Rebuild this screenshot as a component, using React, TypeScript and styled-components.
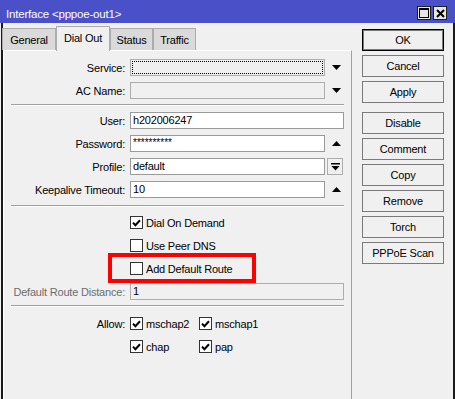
import React, { FC, ReactNode } from "react";
import styled, { createGlobalStyle } from "styled-components";

const GlobalStyle = createGlobalStyle`
  html, body {
    margin: 0;
    padding: 0;
    background: #ffffff;
  }
  body {
    font-family: "Liberation Sans", Arial, sans-serif;
    font-size: 11px;
    letter-spacing: -0.2px;
    color: #000;
  }
`;

const TriangleDown = () => (
  <svg width="9" height="5" viewBox="0 0 9 5">
    <polygon points="0,0 9,0 4.5,5" fill="#000" />
  </svg>
);

const TriangleUp = () => (
  <svg width="9" height="5" viewBox="0 0 9 5">
    <polygon points="0,5 9,5 4.5,0" fill="#000" />
  </svg>
);

const BarDown = () => (
  <svg width="9" height="8" viewBox="0 0 9 8">
    <rect x="0" y="0" width="9" height="1.5" fill="#000" />
    <polygon points="0.5,3 8.5,3 4.5,7.5" fill="#000" />
  </svg>
);

const Tick = () => (
  <svg width="9" height="8" viewBox="0 0 9 8">
    <path d="M1 3.6 L3.4 6.2 L8 1.2" stroke="#000" strokeWidth="2" fill="none" />
  </svg>
);

type CheckProps = {
  checked?: boolean;
  width?: number;
  children: ReactNode;
};

const Check: FC<CheckProps> = (props) => (
  <CheckItem $w={props.width}>
    <Box>{props.checked ? <Tick /> : null}</Box>
    <span>{props.children}</span>
  </CheckItem>
);

type FieldProps = {
  label?: string;
  disabled?: boolean;
  children?: ReactNode;
};

const FormRow: FC<FieldProps> = (props) => (
  <Row>
    <Label $disabled={props.disabled}>{props.label ?? ""}</Label>
    <Field>{props.children}</Field>
  </Row>
);

const App: FC = () => {
  return (
    <>
      <GlobalStyle />
      <Window>
        <TitleBar>
          <Title>Interface &lt;pppoe-out1&gt;</Title>
          <TitleButtons>
            <TitleBtn>
              <svg width="10" height="10" viewBox="0 0 10 10">
                <rect x="0.5" y="0.5" width="9" height="9" fill="none" stroke="#000" />
                <rect x="0" y="0" width="10" height="2" fill="#000" />
              </svg>
            </TitleBtn>
            <TitleBtn>
              <svg width="9" height="9" viewBox="0 0 9 9">
                <path d="M1 1 L8 8 M8 1 L1 8" stroke="#000" strokeWidth="2" />
              </svg>
            </TitleBtn>
          </TitleButtons>
        </TitleBar>

        <Body>
          <LeftCol>
            <Tabs>
              <Tab $w={54}>General</Tab>
              <Tab $w={54} $active>
                Dial Out
              </Tab>
              <Tab $w={43}>Status</Tab>
              <Tab $w={43}>Traffic</Tab>
            </Tabs>

            <Panel>
              <Section $top={8} $bottom={5}>
                <FormRow label="Service:">
                  <TextBox $short $disabled $focus />
                  <Arrow>
                    <TriangleDown />
                  </Arrow>
                </FormRow>
                <FormRow label="AC Name:">
                  <TextBox $short $disabled />
                  <Arrow>
                    <TriangleDown />
                  </Arrow>
                </FormRow>
              </Section>
              <Sep />
              <Section $top={6} $bottom={7}>
                <FormRow label="User:">
                  <TextBox>h202006247</TextBox>
                </FormRow>
                <FormRow label="Password:">
                  <TextBox $short>
                    <Stars>**********</Stars>
                  </TextBox>
                  <Arrow>
                    <TriangleUp />
                  </Arrow>
                </FormRow>
                <FormRow label="Profile:">
                  <TextBox $short>default</TextBox>
                  <SmallBtn>
                    <BarDown />
                  </SmallBtn>
                </FormRow>
                <FormRow label="Keepalive Timeout:">
                  <TextBox $short>10</TextBox>
                  <Arrow>
                    <TriangleUp />
                  </Arrow>
                </FormRow>
              </Section>
              <Sep />
              <Section $top={7} $bottom={5}>
                <FormRow>
                  <Check checked>Dial On Demand</Check>
                </FormRow>
                <FormRow>
                  <Check>Use Peer DNS</Check>
                </FormRow>
                <FormRow>
                  <Highlight>
                    <Check>Add Default Route</Check>
                  </Highlight>
                </FormRow>
                <FormRow label="Default Route Distance:" disabled>
                  <TextBox $disabled>1</TextBox>
                </FormRow>
              </Section>
              <Sep />
              <Section $top={8} $bottom={8}>
                <FormRow label="Allow:">
                  <Check checked width={69}>
                    mschap2
                  </Check>
                  <Check checked>mschap1</Check>
                </FormRow>
                <FormRow>
                  <Check checked width={69}>
                    chap
                  </Check>
                  <Check checked>pap</Check>
                </FormRow>
              </Section>
            </Panel>
          </LeftCol>

          <ButtonCol>
            <Button $default>OK</Button>
            <Button>Cancel</Button>
            <Button>Apply</Button>
            <ButtonGap />
            <Button>Disable</Button>
            <Button>Comment</Button>
            <Button>Copy</Button>
            <Button>Remove</Button>
            <Button>Torch</Button>
            <Button>PPPoE Scan</Button>
          </ButtonCol>
        </Body>
      </Window>
    </>
  );
};

const Window = styled.div`
  width: 455px;
  height: 399px;
  overflow: hidden;
  background: #f0f0f0;
  display: flex;
  flex-direction: column;
`;

const TitleBar = styled.div`
  height: 23px;
  flex: none;
  background: #4a50c8;
  display: flex;
  justify-content: space-between;
  align-items: flex-start;
  padding: 0 8px 0 6px;
`;

const Title = styled.div`
  color: #fff;
  margin-top: 8px;
  line-height: 13px;
  font-size: 11.5px;
  white-space: nowrap;
`;

const TitleButtons = styled.div`
  display: flex;
  gap: 2px;
  margin-top: 6px;
`;

const TitleBtn = styled.div`
  width: 14px;
  height: 14px;
  box-sizing: border-box;
  border: 1px solid #1e1e1e;
  background: #e6e6e6;
  display: flex;
  align-items: center;
  justify-content: center;
`;

const Body = styled.div`
  flex: 1;
  display: flex;
  margin-left: 1px;
  border-left: 2px solid #1a1a1a;
  border-right: 2px solid #1a1a1a;
  min-height: 0;
`;

const LeftCol = styled.div`
  width: 349px;
  display: flex;
  flex-direction: column;
`;

const Tabs = styled.div`
  display: flex;
  align-items: flex-end;
  padding-top: 2px;
  margin-left: -1px;
  height: 25px;
  position: relative;
  z-index: 1;
`;

const Tab = styled.div<{ $w: number; $active?: boolean }>`
  width: ${(p) => p.$w}px;
  height: ${(p) => (p.$active ? 25 : 22)}px;
  box-sizing: border-box;
  border: 1px solid #acacac;
  border-bottom: none;
  background: ${(p) => (p.$active ? "#f0f0f0" : "#dadada")};
  display: flex;
  align-items: center;
  justify-content: center;
  padding-bottom: ${(p) => (p.$active ? 3 : 0)}px;
  margin-bottom: ${(p) => (p.$active ? -1 : 0)}px;
  white-space: nowrap;
`;

const Panel = styled.div`
  flex: 1;
  border-top: 1px solid #ffffff;
  border-left: 1px solid #ffffff;
  border-right: 1px solid #a0a0a0;
  display: flex;
  flex-direction: column;
`;

const Section = styled.div<{ $top: number; $bottom: number }>`
  display: flex;
  flex-direction: column;
  gap: 6px;
  padding-top: ${(p) => p.$top}px;
  padding-bottom: ${(p) => p.$bottom}px;
`;

const Sep = styled.div`
  height: 0;
  margin: 0 7px 0 7px;
  border-top: 1px solid #a0a0a0;
  border-bottom: 1px solid #ffffff;
`;

const Row = styled.div`
  display: flex;
  align-items: center;
  height: 17px;
`;

const Label = styled.div<{ $disabled?: boolean }>`
  width: 121px;
  flex: none;
  text-align: right;
  white-space: nowrap;
  color: ${(p) => (p.$disabled ? "#6d6d6d" : "#000")};
`;

const Field = styled.div`
  width: 214px;
  margin-left: 5px;
  display: flex;
  align-items: center;
  height: 17px;
`;

const TextBox = styled.div<{ $short?: boolean; $disabled?: boolean; $focus?: boolean }>`
  width: ${(p) => (p.$short ? 195 : 214)}px;
  height: 17px;
  flex: none;
  box-sizing: border-box;
  border: 1px solid ${(p) => (p.$disabled ? "#adadad" : "#9a9a9a")};
  background: ${(p) => (p.$disabled ? "#f0f0f0" : "#ffffff")};
  padding-left: 2px;
  line-height: 15px;
  white-space: nowrap;
  overflow: hidden;
  outline: ${(p) => (p.$focus ? "1px dotted #000" : "none")};
  outline-offset: -3px;
`;

const Stars = styled.span`
  letter-spacing: 0;
  font-size: 10px;
  position: relative;
  top: -1px;
`;

const Arrow = styled.div`
  flex: 1;
  display: flex;
  justify-content: center;
  padding-left: 3px;
`;

const SmallBtn = styled.div`
  width: 16px;
  height: 17px;
  margin-left: 2px;
  box-sizing: border-box;
  border: 1px solid #adadad;
  background: #f0f0f0;
  display: flex;
  align-items: center;
  justify-content: center;
`;

const CheckItem = styled.label<{ $w?: number }>`
  display: flex;
  align-items: center;
  gap: 3px;
  width: ${(p) => (p.$w ? `${p.$w}px` : "auto")};
  flex: none;
  white-space: nowrap;
`;

const Box = styled.span`
  width: 13px;
  height: 13px;
  box-sizing: border-box;
  border: 1px solid #333;
  background: #fff;
  display: inline-flex;
  align-items: center;
  justify-content: center;
`;

const Highlight = styled.div`
  position: relative;
  display: flex;

  &::before {
    content: "";
    position: absolute;
    left: -22px;
    top: -9px;
    width: 148px;
    height: 30px;
    box-sizing: border-box;
    border: 4px solid #ff0000;
  }
`;

const ButtonCol = styled.div`
  margin-left: 10px;
  padding-top: 6px;
  width: 82px;
  display: flex;
  flex-direction: column;
  gap: 4px;
`;

const ButtonGap = styled.div`
  height: 1px;
`;

const Button = styled.div<{ $default?: boolean }>`
  height: 22px;
  box-sizing: border-box;
  border: 1px solid ${(p) => (p.$default ? "#000" : "#7a7a7a")};
  box-shadow: ${(p) => (p.$default ? "inset 0 0 0 1px #7a7a7a" : "none")};
  background: #f0f0f0;
  display: flex;
  align-items: center;
  justify-content: center;
  white-space: nowrap;
`;

export default App;
